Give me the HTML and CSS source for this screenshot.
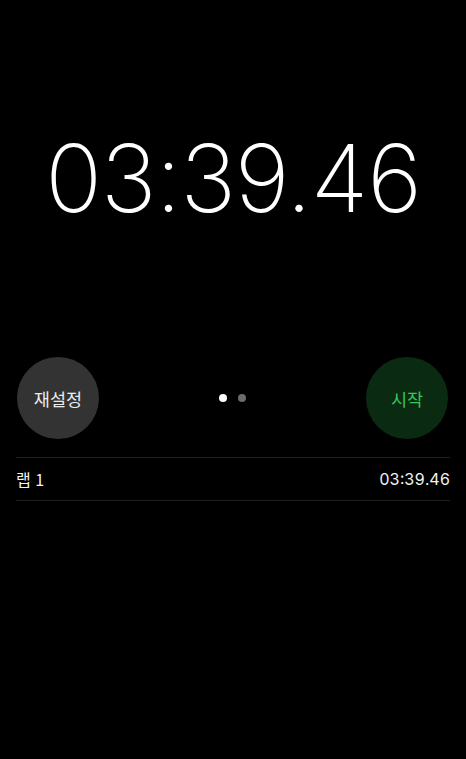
FILE: index.html
```html
<!DOCTYPE html>
<html lang="ko">
<head>
<meta charset="utf-8">
<link rel="stylesheet" href="styles.css">
</head>
<body>
<div class="screen">
  <div class="time">03:39.46</div>
  <div class="controls">
    <div class="btn btn-reset">재설정</div>
    <div class="dots"><span class="dot on"></span><span class="dot"></span></div>
    <div class="btn btn-start">시작</div>
  </div>
  <div class="laps">
    <div class="lap"><span class="lap-name">랩 1</span><span class="lap-time">03:39.46</span></div>
  </div>
</div>
</body>
</html>
```

FILE: styles.css
```css
html, body {
  margin: 0;
  padding: 0;
  background: #000;
}
.screen {
  width: 466px;
  height: 759px;
  background: #000;
  color: #fff;
  font-family: Inter, "Noto Sans CJK KR", sans-serif;
  display: flex;
  flex-direction: column;
}
.time {
  margin-top: 118px;
  height: 120px;
  line-height: 120px;
  text-align: center;
  font-family: Inter, sans-serif;
  font-weight: 200;
  font-size: 94px;
  letter-spacing: -1.2px;
}
.controls {
  margin-top: 119px;
  padding: 0 18px 0 17px;
  height: 82px;
  display: flex;
  align-items: center;
  justify-content: space-between;
}
.btn {
  width: 82px;
  height: 82px;
  border-radius: 50%;
  display: flex;
  align-items: center;
  justify-content: center;
  font-family: "Noto Sans CJK KR", sans-serif;
  font-size: 17.5px;
}
.btn-reset {
  background: #333333;
  color: #ececec;
}
.btn-start {
  background: #0b2a12;
  color: #34c759;
}
.dots {
  display: flex;
  gap: 11px;
}
.dot {
  width: 8px;
  height: 8px;
  border-radius: 50%;
  background: #6b6b6b;
}
.dot.on {
  background: #fff;
}
.laps {
  margin: 18px 16px 0 16px;
  border-top: 1px solid #1f1f1f;
}
.lap {
  height: 42px;
  border-bottom: 1px solid #1f1f1f;
  display: flex;
  align-items: center;
  justify-content: space-between;
  font-size: 16px;
  color: #f2f2f2;
}
.lap-name {
  font-family: "Noto Sans CJK KR", sans-serif;
}
.lap-time {
  font-family: Inter, sans-serif;
  font-variant-numeric: tabular-nums;
}
```
